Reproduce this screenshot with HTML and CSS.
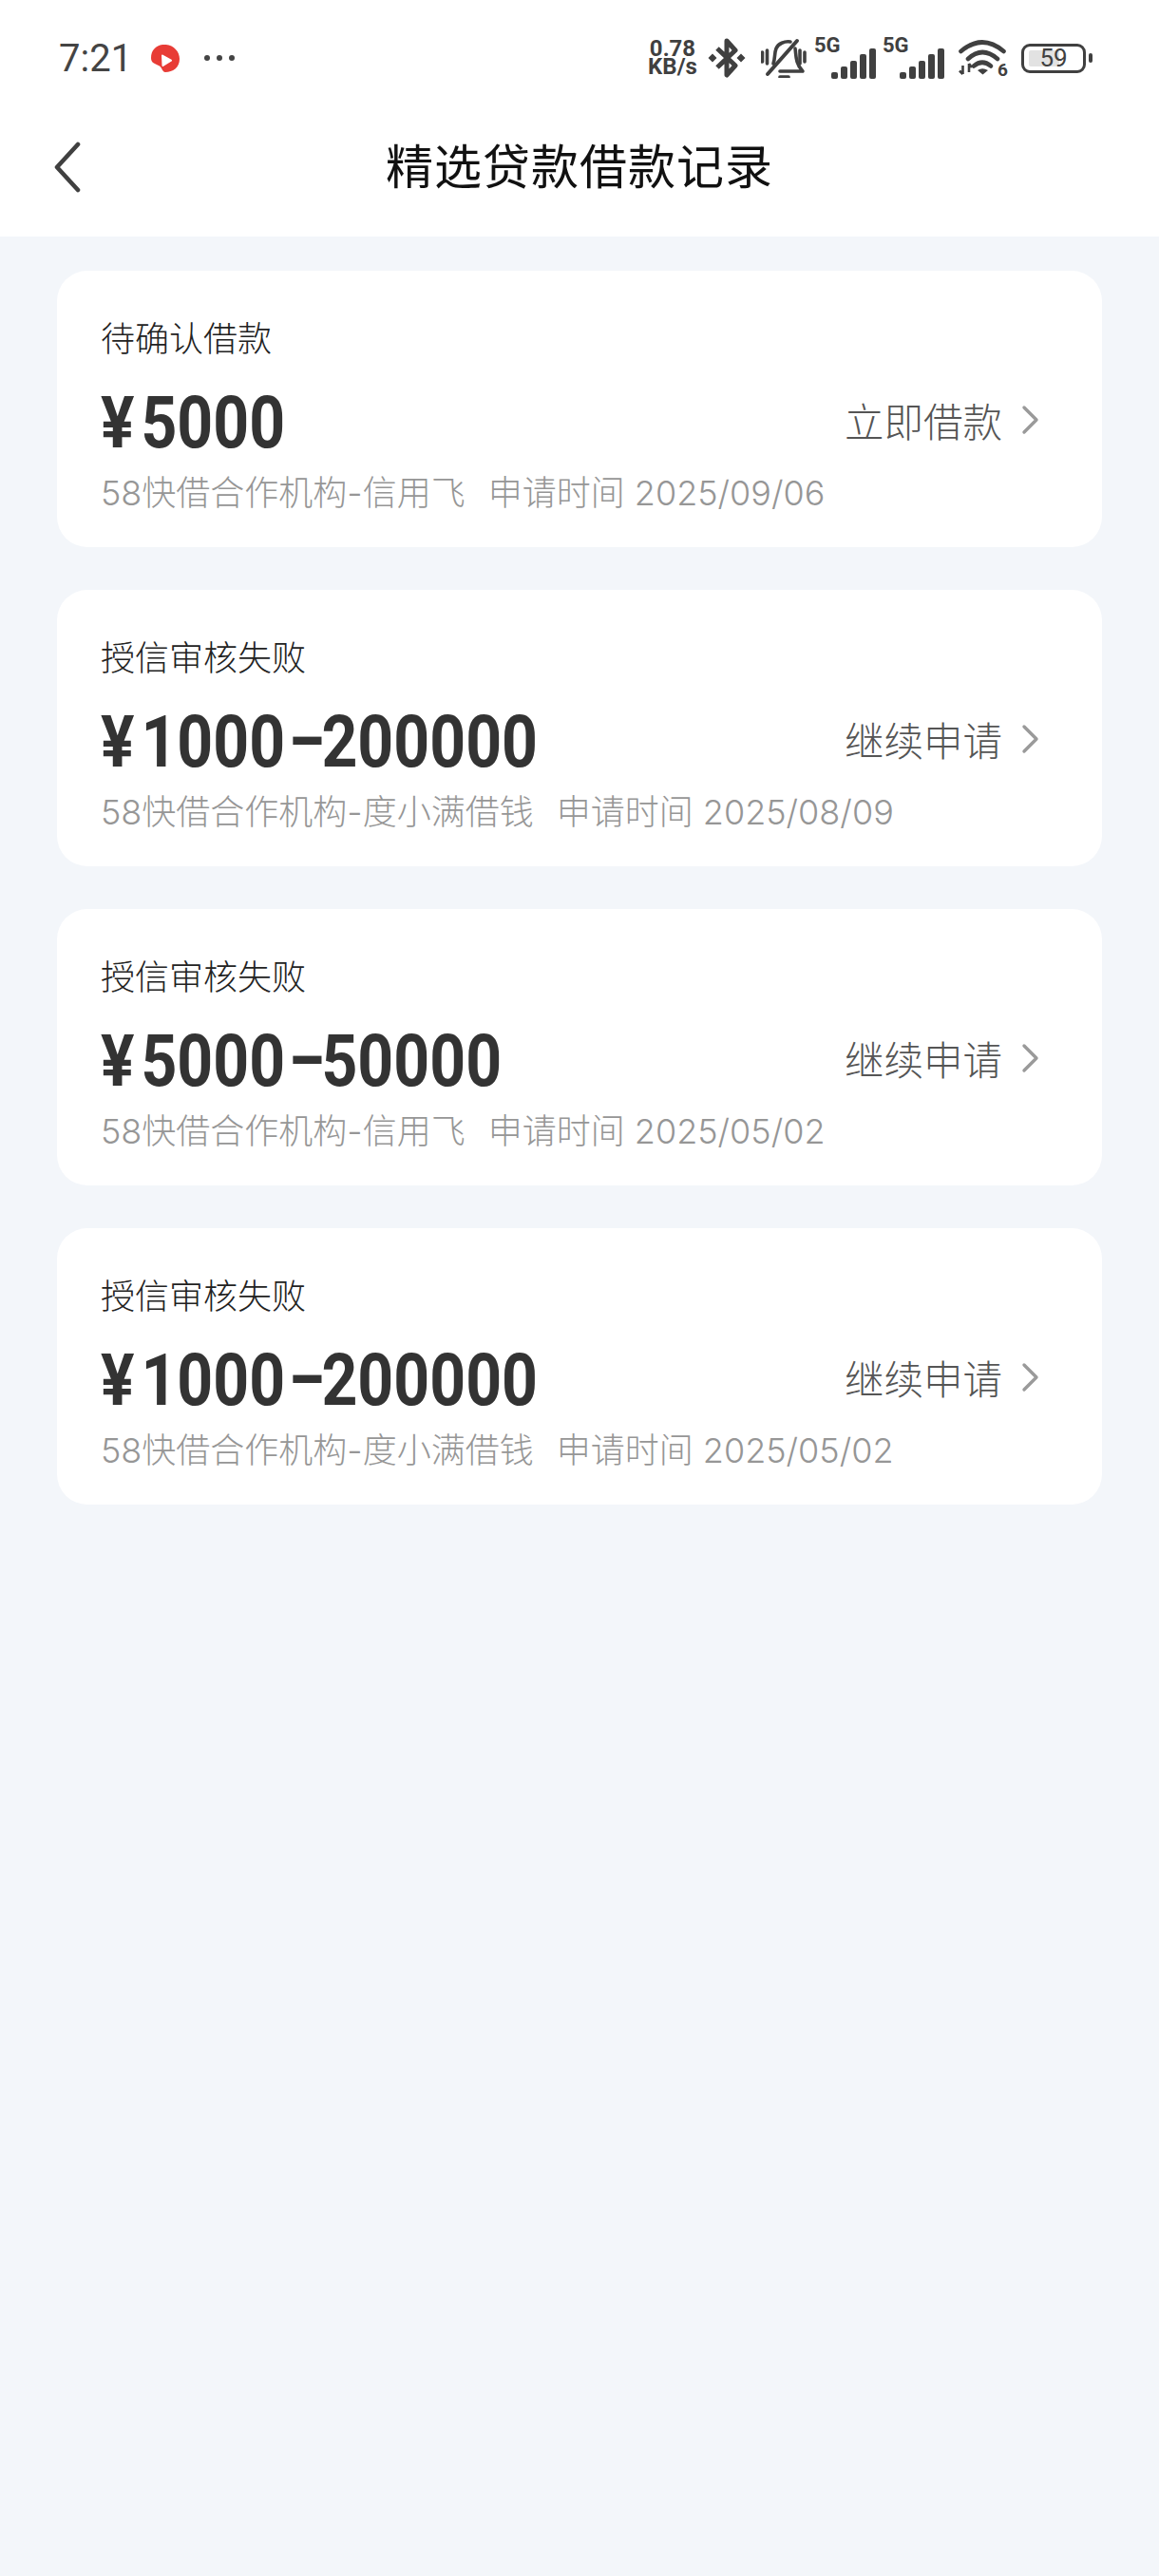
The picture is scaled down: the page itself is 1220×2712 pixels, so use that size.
FILE: index.html
```html
<!DOCTYPE html>
<html lang="zh-CN">
<head>
    <meta charset="UTF-8">
    <meta name="viewport" content="width=device-width, initial-scale=1.0">
    <title>精选贷款借款记录</title>
    <link rel="stylesheet" href="styles.css">
</head>
<body>
    <div id="app">
        <header>
            <div class="status-bar">
                <div class="status-left">
                    <span class="time">7:21</span>
                    <svg class="app-icon" viewBox="0 0 30 29"><path d="M12 0C22-1 30 6 30 15C30 24 23 29 15 29C12 29 12 25 9 22.5C5 20 0 20 0 14C0 6 5 1 12 0Z" fill="#e83c36"/><path d="M12 11.5L21 16.7L12.5 22Z" fill="#fff" stroke="#fff" stroke-width="2" stroke-linejoin="round"/></svg>
                    <svg class="dots" viewBox="0 0 34 8"><circle cx="4" cy="4" r="3"/><circle cx="17" cy="4" r="3"/><circle cx="30" cy="4" r="3"/></svg>
                </div>
                <div class="status-right">
                    <div class="speed">0.78<br>KB/s</div>
                    <svg class="bt" viewBox="0 0 38 42"><path d="M9 11L28 29L19 39V3L28 13L9 31" fill="none" stroke="#404040" stroke-width="5" stroke-linejoin="round"/><path d="M4 16.5L8.5 21L4 25.5L-.5 21ZM34 16.5L38.5 21L34 25.5L29.5 21Z" fill="#404040"/></svg>
                    <svg class="bell" viewBox="0 0 48 42"><g fill="none" stroke="#404040" stroke-width="3.6" stroke-linecap="round" stroke-linejoin="round"><path d="M1.5 15V25M6.5 13V27M41 13V27M46 15V25"/><path d="M13 27C15 22 14 16 16 11C18 6 25 3 31 4"/><path d="M36 11C37 17 36 27 44 35H20"/><path d="M38 3L7 38" stroke-width="4"/><path d="M20 41H29"/></g></svg>
                    <div class="signal"><span class="net">5G</span><svg class="bars" viewBox="0 0 48 32"><rect x="0" y="25" width="7" height="7" rx="2"/><rect x="10" y="19" width="7" height="13" rx="2"/><rect x="20" y="13" width="7" height="19" rx="2"/><rect x="30" y="6" width="7" height="26" rx="2"/><rect x="40" y="0" width="7" height="32" rx="2"/></svg></div>
                    <div class="signal"><span class="net">5G</span><svg class="bars" viewBox="0 0 48 32"><rect x="0" y="25" width="7" height="7" rx="2"/><rect x="10" y="19" width="7" height="13" rx="2"/><rect x="20" y="13" width="7" height="19" rx="2"/><rect x="30" y="6" width="7" height="26" rx="2"/><rect x="40" y="0" width="7" height="32" rx="2"/></svg></div>
                    <div class="wifi">
                        <svg viewBox="0 0 50 40"><g fill="none" stroke="#404040" stroke-width="4.6" stroke-linecap="round"><path d="M2.500 13Q25-6 47.500 13"/><path d="M10 21Q25 7 41 21"/><path d="M16 28.500Q25 21 34 28.500"/></g><path d="M20 33Q25 29.500 31 33L25.500 37.500Z" fill="#404040"/><path d="M4.500 28V37M1 33.500L4.500 37M11 35V26M11 26L14 30" fill="none" stroke="#404040" stroke-width="2.600"/></svg>
                        <span class="wifi-num">6</span>
                    </div>
                    <div class="battery">
                        <div class="battery-body"><div class="battery-level"></div><span class="battery-text">59</span></div>
                        <div class="battery-nub"></div>
                    </div>
                </div>
            </div>
            <div class="nav">
                <svg class="back" viewBox="0 0 30 54"><path d="M26 3L4 27L26 51" fill="none" stroke="#404040" stroke-width="4.6" stroke-linecap="round" stroke-linejoin="round"/></svg>
                <h1>精选贷款借款记录</h1>
            </div>
        </header>
        <div class="content">
            <div class="card">
                <div class="label">待确认借款</div>
                <div class="row">
                    <div class="amount"><span class="yen">¥</span>5000</div>
                    <div class="action">立即借款<svg class="arrow" viewBox="0 0 20 32"><path d="M3 3L16 16L3 29" fill="none" stroke="#9a9a9a" stroke-width="3.4" stroke-linecap="round" stroke-linejoin="round"/></svg></div>
                </div>
                <div class="info"><span>58快借合作机构-信用飞</span><span>申请时间 2025/09/06</span></div>
            </div>
            <div class="card">
                <div class="label">授信审核失败</div>
                <div class="row">
                    <div class="amount"><span class="yen">¥</span>1000<span class="dash">-</span>200000</div>
                    <div class="action">继续申请<svg class="arrow" viewBox="0 0 20 32"><path d="M3 3L16 16L3 29" fill="none" stroke="#9a9a9a" stroke-width="3.4" stroke-linecap="round" stroke-linejoin="round"/></svg></div>
                </div>
                <div class="info"><span>58快借合作机构-度小满借钱</span><span>申请时间 2025/08/09</span></div>
            </div>
            <div class="card">
                <div class="label">授信审核失败</div>
                <div class="row">
                    <div class="amount"><span class="yen">¥</span>5000<span class="dash">-</span>50000</div>
                    <div class="action">继续申请<svg class="arrow" viewBox="0 0 20 32"><path d="M3 3L16 16L3 29" fill="none" stroke="#9a9a9a" stroke-width="3.4" stroke-linecap="round" stroke-linejoin="round"/></svg></div>
                </div>
                <div class="info"><span>58快借合作机构-信用飞</span><span>申请时间 2025/05/02</span></div>
            </div>
            <div class="card">
                <div class="label">授信审核失败</div>
                <div class="row">
                    <div class="amount"><span class="yen">¥</span>1000<span class="dash">-</span>200000</div>
                    <div class="action">继续申请<svg class="arrow" viewBox="0 0 20 32"><path d="M3 3L16 16L3 29" fill="none" stroke="#9a9a9a" stroke-width="3.4" stroke-linecap="round" stroke-linejoin="round"/></svg></div>
                </div>
                <div class="info"><span>58快借合作机构-度小满借钱</span><span>申请时间 2025/05/02</span></div>
            </div>
        </div>
    </div>
</body>
</html>
```

FILE: styles.css
```css
/* General Styles */
body {
    margin: 0;
    padding: 0;
    height: 2712px;
    background-color: #f3f6fa;
    color: #333;
    font-family: "Noto Sans CJK SC", "Noto Sans", sans-serif;
}
header {
    height: 249px;
    background-color: #fff;
}

/* Status bar */
.status-bar {
    height: 122px;
    padding: 0 70px 0 62px;
    display: flex;
    justify-content: space-between;
    align-items: center;
}
.status-left {
    display: flex;
    align-items: center;
}
.time {
    font-family: Roboto, sans-serif;
    font-size: 40px;
    color: #444;
    width: 97px;
}
.app-icon {
    width: 30px;
    height: 29px;
}
.dots {
    width: 34px;
    height: 8px;
    margin-left: 25px;
    fill: #444;
}
.status-right {
    display: flex;
    align-items: center;
    color: #404040;
}
.speed {
    width: 56px;
    font-family: Roboto, sans-serif;
    font-size: 24px;
    font-weight: 700;
    line-height: 19px;
    text-align: center;
}
.bt {
    width: 38px;
    height: 42px;
    margin-left: 10px;
    overflow: visible;
}
.bell {
    width: 48px;
    height: 42px;
    margin-left: 17px;
}
.signal {
    width: 66px;
    height: 44px;
    margin-left: 8px;
    position: relative;
}
.signal + .signal {
    margin-left: 6px;
}
.net {
    position: absolute;
    left: 0;
    top: -3px;
    font-family: Roboto, sans-serif;
    font-size: 22px;
    font-weight: 700;
    line-height: 24px;
}
.bars {
    position: absolute;
    right: 0;
    bottom: 0;
    width: 48px;
    height: 32px;
    fill: #404040;
}
.wifi {
    width: 50px;
    height: 40px;
    margin-left: 14px;
    position: relative;
}
.wifi svg {
    display: block;
    width: 50px;
    height: 40px;
    overflow: visible;
}
.wifi-num {
    position: absolute;
    right: -2px;
    bottom: 0;
    font-family: Roboto, sans-serif;
    font-size: 19px;
    font-weight: 700;
    line-height: 14px;
}
.battery {
    display: flex;
    align-items: center;
    gap: 3px;
    margin-left: 16px;
}
.battery-body {
    width: 57px;
    height: 25px;
    padding: 0 0 0 5px;
    display: flex;
    align-items: center;
    border: 3px solid #404040;
    border-radius: 9px;
    position: relative;
}
.battery-level {
    width: 32px;
    height: 17px;
    border-radius: 2px;
    background-color: #e2e2e2;
}
.battery-text {
    position: absolute;
    left: 0;
    right: 0;
    top: 0;
    text-align: center;
    font-family: Roboto, sans-serif;
    font-size: 26px;
    line-height: 25px;
    color: #404040;
}
.battery-nub {
    width: 4px;
    height: 10px;
    border-radius: 2px;
    background-color: #404040;
}

/* Title bar */
.nav {
    height: 106px;
    position: relative;
    display: flex;
    justify-content: center;
    align-items: flex-start;
}
.nav h1 {
    margin: 0;
    font-size: 50px;
    line-height: 106px;
    margin-top: -3px;
    font-weight: 400;
    letter-spacing: 1px;
    color: #111;
}
.back {
    position: absolute;
    left: 56px;
    top: 27px;
    width: 30px;
    height: 54px;
}

/* Records */
.content {
    padding: 36px 60px 0;
    display: flex;
    flex-direction: column;
    gap: 45px;
}
.card {
    height: 291px;
    box-sizing: border-box;
    padding: 44px 65px 0 46px;
    background-color: #fff;
    border-radius: 32px;
}
.label {
    font-size: 36px;
    font-weight: 300;
    line-height: 50px;
    color: #222;
}
.row {
    display: flex;
    justify-content: space-between;
    align-items: center;
    height: 90px;
    margin-top: 21px;
}
.amount {
    font-family: Roboto, sans-serif;
    font-size: 76px;
    font-weight: 700;
    color: #333;
    transform: scaleX(.87);
    transform-origin: left center;
    white-space: nowrap;
}
.yen {
    margin-right: 8px;
}
.dash {
    display: inline-block;
    width: 20px;
    margin: 0 15px 0 9px;
    text-align: center;
    transform: translateY(-4px) scaleX(1.65);
}
.action {
    display: flex;
    align-items: center;
    padding-bottom: 6px;
    font-size: 41.5px;
    font-weight: 300;
    color: #555;
}
.arrow {
    width: 20px;
    height: 32px;
    margin-left: 20px;
}
.info {
    display: flex;
    gap: 24px;
    margin-top: 4px;
    font-family: Inter, "Noto Sans CJK SC", sans-serif;
    font-size: 36px;
    font-weight: 300;
    line-height: 50px;
    color: #969696;
}
```
